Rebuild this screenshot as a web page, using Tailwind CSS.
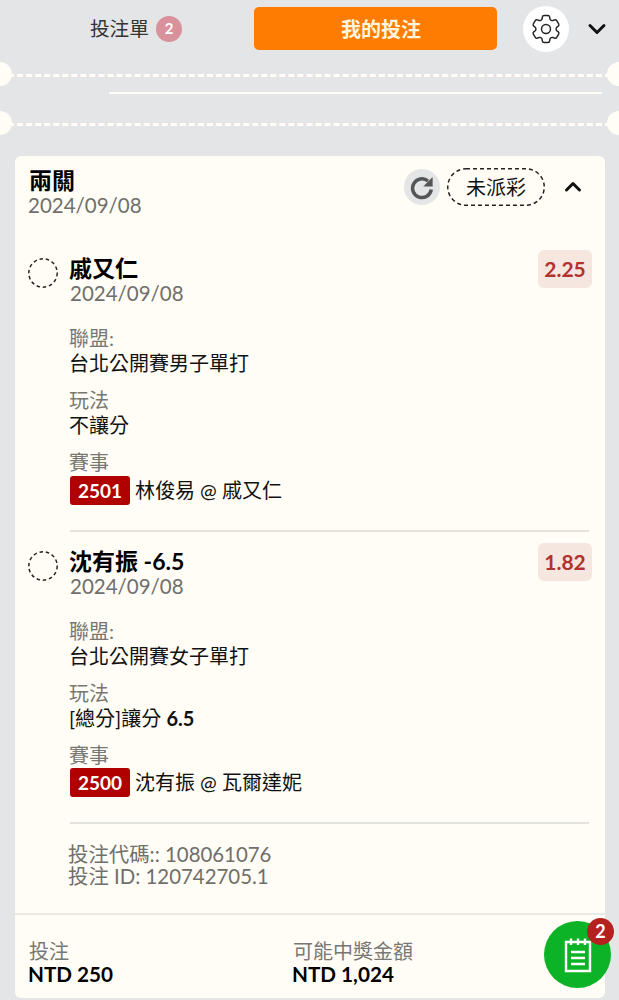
<!DOCTYPE html>
<html lang="zh-Hant">
<head>
<meta charset="utf-8">
<script src="https://cdn.jsdelivr.net/npm/@tailwindcss/browser@4"></script>
</head>
<body class="m-0">
<div class="relative w-[619px] h-[1000px] overflow-hidden bg-[#e4e5e7] font-['Lato','Noto_Sans_CJK_TC',sans-serif] text-[#111]">
  <!-- header -->
  <div class="flex items-center h-[57px]">
    <div class="w-[254px] flex items-center justify-end pr-[72px] gap-[7px]">
      <span class="text-[19.7px] leading-[28px] text-[#333] whitespace-nowrap">投注單</span>
      <span class="w-[26px] h-[26px] rounded-full bg-[#d9919b] text-[#fff] text-[15px] font-bold flex items-center justify-center">2</span>
    </div>
    <div class="w-[243px] h-[43px] pl-[11px] rounded-[5px] bg-[#ff7c03] text-[#fff5dc] text-[20px] font-bold flex items-center justify-center">我的投注</div>
    <div class="ml-[26px] w-[46px] h-[46px] rounded-full bg-white flex items-center justify-center">
      <svg width="36" height="36" viewBox="0 0 24 24" fill="none" stroke="#222" stroke-width="0.95" stroke-linecap="round" stroke-linejoin="round"><path d="M9.594 3.94c.09-.542.56-.94 1.11-.94h2.593c.55 0 1.02.398 1.11.94l.213 1.281c.063.374.313.686.645.87.074.04.147.083.22.127.325.196.72.257 1.075.124l1.217-.456a1.125 1.125 0 0 1 1.37.49l1.296 2.247a1.125 1.125 0 0 1-.26 1.431l-1.003.827c-.293.241-.438.613-.43.992a7.723 7.723 0 0 1 0 .255c-.008.378.137.75.43.991l1.004.827c.424.35.534.955.26 1.43l-1.298 2.247a1.125 1.125 0 0 1-1.369.491l-1.217-.456c-.355-.133-.75-.072-1.076.124a6.47 6.47 0 0 1-.22.128c-.331.183-.581.495-.644.869l-.213 1.281c-.09.543-.56.94-1.11.94h-2.594c-.55 0-1.019-.398-1.11-.94l-.213-1.281c-.062-.374-.312-.686-.644-.87a6.52 6.52 0 0 1-.22-.127c-.325-.196-.72-.257-1.076-.124l-1.217.456a1.125 1.125 0 0 1-1.369-.49l-1.297-2.247a1.125 1.125 0 0 1 .26-1.431l1.004-.827c.292-.24.437-.613.43-.991a6.932 6.932 0 0 1 0-.255c.007-.38-.138-.751-.43-.992l-1.004-.827a1.125 1.125 0 0 1-.26-1.43l1.297-2.247a1.125 1.125 0 0 1 1.37-.491l1.216.456c.356.133.751.072 1.076-.124.072-.044.146-.086.22-.128.332-.183.582-.495.644-.869l.214-1.28Z"/><circle cx="12" cy="12" r="3"/></svg>
    </div>
    <svg class="ml-[18px]" width="20" height="14" viewBox="0 0 20 14" fill="none" stroke="#111" stroke-width="3" stroke-linecap="round" stroke-linejoin="round"><path d="M3 3.5 10 10.5 17 3.5"/></svg>
  </div>

  <!-- collapsed ticket strip -->
  <div class="relative h-[99px] flow-root">
    <div class="mt-[17px] mx-[8px] border-t-[3px] border-dashed border-[#fffdf6]"></div>
    <div class="mt-[15px] ml-[109px] mr-[17px] h-[2px] bg-[#fffdf6]"></div>
    <div class="mt-[29px] mx-[8px] border-t-[3px] border-dashed border-[#fffdf6]"></div>
    <div class="absolute left-[-12px] top-[5px] w-[24px] h-[24px] rounded-full bg-[#fffdf6]"></div>
    <div class="absolute right-[-12px] top-[5px] w-[24px] h-[24px] rounded-full bg-[#fffdf6]"></div>
    <div class="absolute left-[-12px] top-[54px] w-[24px] h-[24px] rounded-full bg-[#fffdf6]"></div>
    <div class="absolute right-[-12px] top-[54px] w-[24px] h-[24px] rounded-full bg-[#fffdf6]"></div>
  </div>

  <!-- card -->
  <div class="ml-[15px] mr-[14px] h-[842px] rounded-[6px] bg-[#fffdf6]">
    <div class="flex items-start justify-between h-[91px] pt-[11px] pl-[14px] pr-[23px]">
      <div>
        <div class="text-[23px] leading-[26px] font-bold text-[#000]">兩關</div>
        <div class="-ml-px text-[20.5px] leading-[24px] text-[#6f6f6b]">2024/09/08</div>
      </div>
      <div class="flex items-center mt-[1px]">
        <div class="w-[36px] h-[36px] rounded-full bg-[#e4e5e7] flex items-center justify-center">
          <svg width="30" height="30" viewBox="0 0 24 24" fill="none"><path d="M19.4 14A7.5 7.5 0 1 1 16.8 7.2" stroke="#555" stroke-width="2.8"/><path d="M20.5 4V11.5H13Z" fill="#555"/></svg>
        </div>
        <div class="relative ml-[7px] w-[98px] h-[38px] text-[20px] flex items-center justify-center">
          未派彩
          <svg class="absolute inset-0" width="98" height="38" fill="none"><rect x="0.75" y="0.75" width="96.5" height="36.5" rx="18.25" stroke="#222" stroke-width="1.5" stroke-dasharray="4 3"/></svg>
        </div>
        <svg class="ml-[19px]" width="18" height="12" viewBox="0 0 18 12" fill="none" stroke="#111" stroke-width="3" stroke-linecap="round" stroke-linejoin="round"><path d="M2.5 9 9 2.5 15.5 9"/></svg>
      </div>
    </div>

    <!-- leg 1 -->
    <div class="flex pl-[13px] pr-[13px]">
      <svg class="mt-[11px] shrink-0" width="30" height="30" fill="none"><circle cx="15" cy="15" r="14.2" stroke="#222" stroke-width="1.5" stroke-dasharray="3.5 2.8"/></svg>
      <div class="ml-[12px] flex-1 min-w-0">
        <div class="flex justify-between items-start">
          <div class="pt-[8px]">
            <div class="-ml-px text-[23px] leading-[26px] font-bold text-[#000]">戚又仁</div>
            <div class="text-[20.5px] leading-[24px] text-[#6f6f6b]">2024/09/08</div>
          </div>
          <div class="mt-[3px] w-[54px] h-[38px] rounded-[6px] bg-[#f6e6e0] text-[#b3312f] text-[21px] font-bold flex items-center justify-center">2.25</div>
        </div>
        <div class="mt-[21px] text-[20px] leading-[25px]">
          <div class="-ml-px text-[#777773]">聯盟:</div>
          <div class="-ml-px">台北公開賽男子單打</div>
          <div class="-ml-px mt-[12px] text-[#777773]">玩法</div>
          <div class="-ml-px">不讓分</div>
          <div class="-ml-px mt-[12px] text-[#777773]">賽事</div>
          <div class="flex items-center h-[29px] mt-[1px]">
            <span class="w-[60px] h-[29px] rounded-[3px] bg-[#b00000] text-[#fff] text-[19px] font-bold flex items-center justify-center">2501</span>
            <span class="ml-[5px]">林俊易 @ 戚又仁</span>
          </div>
        </div>
        <div class="mt-[25px] mr-[3px] h-[2px] bg-[#e3e3de]"></div>
      </div>
    </div>

    <!-- leg 2 -->
    <div class="flex pl-[13px] pr-[13px]">
      <svg class="mt-[19px] shrink-0" width="30" height="30" fill="none"><circle cx="15" cy="15" r="14.2" stroke="#222" stroke-width="1.5" stroke-dasharray="3.5 2.8"/></svg>
      <div class="ml-[12px] flex-1 min-w-0">
        <div class="flex justify-between items-start">
          <div class="pt-[16px]">
            <div class="-ml-px text-[23px] leading-[26px] font-bold text-[#000]">沈有振 -6.5</div>
            <div class="text-[20.5px] leading-[24px] text-[#6f6f6b]">2024/09/08</div>
          </div>
          <div class="mt-[11px] w-[54px] h-[38px] rounded-[6px] bg-[#f6e6e0] text-[#b3312f] text-[21px] font-bold flex items-center justify-center">1.82</div>
        </div>
        <div class="mt-[21px] text-[20px] leading-[25px]">
          <div class="-ml-px text-[#777773]">聯盟:</div>
          <div class="-ml-px">台北公開賽女子單打</div>
          <div class="-ml-px mt-[12px] text-[#777773]">玩法</div>
          <div class="-ml-px">[總分]讓分 <b>6.5</b></div>
          <div class="-ml-px mt-[12px] text-[#777773]">賽事</div>
          <div class="flex items-center h-[29px]">
            <span class="w-[60px] h-[29px] rounded-[3px] bg-[#b00000] text-[#fff] text-[19px] font-bold flex items-center justify-center">2500</span>
            <span class="ml-[5px]">沈有振 @ 瓦爾達妮</span>
          </div>
        </div>
        <div class="mt-[25px] mr-[3px] h-[2px] bg-[#e3e3de]"></div>
      </div>
    </div>

    <div class="pl-[53px] pt-[19px] pb-[1px] text-[20.4px] leading-[22px] text-[#6f6f6b]">
      <div>投注代碼:: 108061076</div>
      <div>投注 ID: 120742705.1</div>
    </div>

    <div class="mt-[25px] h-[2px] bg-[#e9e9e5]"></div>
    <div class="flex pl-[14px] pt-[25px] text-[20px] leading-[23px]">
      <div class="w-[264px]">
        <div class="text-[#777773]">投注</div>
        <div class="-ml-px text-[20.7px] font-bold text-[#000]">NTD 250</div>
      </div>
      <div>
        <div class="text-[#777773]">可能中獎金額</div>
        <div class="-ml-px text-[20.7px] font-bold text-[#000]">NTD 1,024</div>
      </div>
    </div>
  </div>

  <!-- floating button -->
  <div class="absolute left-[544px] top-[921px] w-[67px] h-[67px] rounded-full bg-[#0db327] flex items-center justify-center">
    <svg width="30" height="38" viewBox="0 0 30 38" fill="none" stroke="#fff" stroke-width="2.4"><path d="M3 6H27V35H3Z"/><path d="M8 2.5V9M15 2.5V9M22 2.5V9"/><path d="M8 16H22M8 22H22M8 28H22"/></svg>
    <span class="absolute left-[43px] top-[-3px] w-[27px] h-[27px] rounded-full bg-[#b5211f] text-[#fff] text-[18px] font-bold flex items-center justify-center">2</span>
  </div>
</div>
</body>
</html>
